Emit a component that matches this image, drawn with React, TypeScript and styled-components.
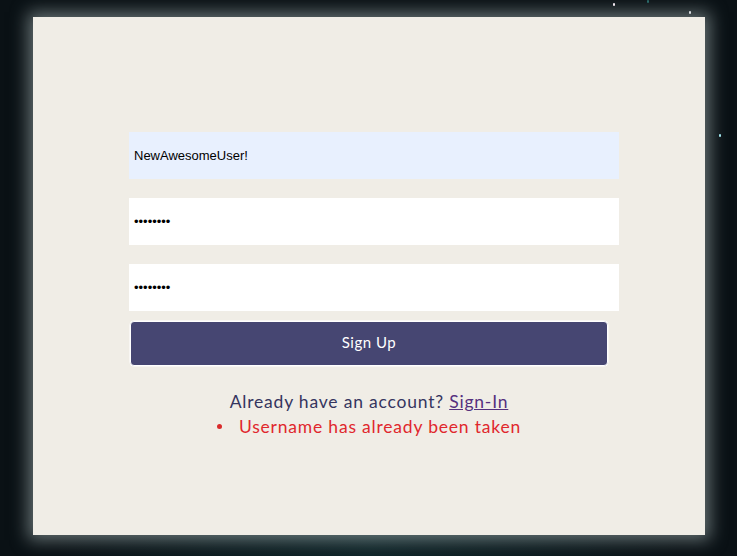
import React from "react";
import styled, { createGlobalStyle } from "styled-components";

const Global = createGlobalStyle`
  html, body { margin: 0; padding: 0; }
  body {
    background: #0a1115;
    width: 737px;
    height: 556px;
    overflow: hidden;
    font-family: "Lato", "Noto Sans", sans-serif;
  }
`;

const Scene = styled.div`
  position: relative;
  width: 737px;
  height: 556px;
  padding-top: 17px;
  box-sizing: border-box;
  background: radial-gradient(ellipse at 50% 100%, #0f2428 0%, #0a1115 60%);
`;

const Star = styled.span<{ $x: number; $y: number; $c: string }>`
  position: absolute;
  left: ${(p) => p.$x}px;
  top: ${(p) => p.$y}px;
  width: 2px;
  height: 3px;
  border-radius: 1px;
  background: ${(p) => p.$c};
`;

const Card = styled.div`
  margin-left: 33px;
  width: 672px;
  height: 518px;
  background: #f0ede6;
  box-shadow: 0 0 16px 5px rgba(190, 205, 205, 0.5);
  padding: 115px 0 0 96px;
  box-sizing: border-box;
`;

const Form = styled.form`
  width: 490px;
  display: flex;
  flex-direction: column;
`;

const Input = styled.input<{ $filled?: boolean }>`
  width: 490px;
  height: 47px;
  box-sizing: border-box;
  border: none;
  outline: none;
  padding: 0 5px;
  margin-bottom: 19px;
  background: ${(p) => (p.$filled ? "#e8f0fe" : "#ffffff")};
  font-family: "Liberation Sans", Arial, sans-serif;
  font-size: 13px;
  color: #000;
  &:last-of-type { margin-bottom: 10px; }
`;

const Button = styled.button`
  margin-left: 1px;
  width: 478px;
  height: 45px;
  box-sizing: border-box;
  padding: 0 0 3px;
  background: #464672;
  border: 1px solid #ffffff;
  box-shadow: 0 0 0 0.5px #ffffff;
  border-radius: 4px;
  color: #ffffff;
  font-family: "Lato", "Noto Sans", sans-serif;
  font-size: 15px;
  letter-spacing: 0.5px;
  cursor: pointer;
`;

const Footer = styled.div`
  width: 478px;
  margin-left: 1px;
  margin-top: 23px;
  display: flex;
  flex-direction: column;
  align-items: center;
  font-size: 17.5px;
  letter-spacing: 0.8px;
  line-height: 25px;
`;

const Prompt = styled.div`
  color: #35355f;
`;

const Link = styled.a`
  color: #55307e;
  text-decoration: underline;
`;

const ErrorRow = styled.div`
  display: flex;
  align-items: center;
  gap: 17px;
  color: #e0272d;
`;

const Bullet = styled.span`
  width: 5px;
  height: 5px;
  border-radius: 50%;
  background: #d92b2b;
`;

export default function App() {
  return (
    <>
      <Global />
      <Scene>
        <Star $x={613} $y={3} $c="#f2e8f0" />
        <Star $x={689} $y={11} $c="#d8dde0" />
        <Star $x={719} $y={134} $c="#9fe3ea" />
        <Star $x={647} $y={0} $c="#2a6a6a" />
        <Card>
          <Form onSubmit={(e) => e.preventDefault()}>
            <Input $filled type="text" defaultValue="NewAwesomeUser!" />
            <Input type="password" defaultValue="12345678" />
            <Input type="password" defaultValue="12345678" />
            <Button type="submit">Sign Up</Button>
          </Form>
          <Footer>
            <Prompt>
              Already have an account? <Link href="#">Sign-In</Link>
            </Prompt>
            <ErrorRow>
              <Bullet />
              <span>Username has already been taken</span>
            </ErrorRow>
          </Footer>
        </Card>
      </Scene>
    </>
  );
}
